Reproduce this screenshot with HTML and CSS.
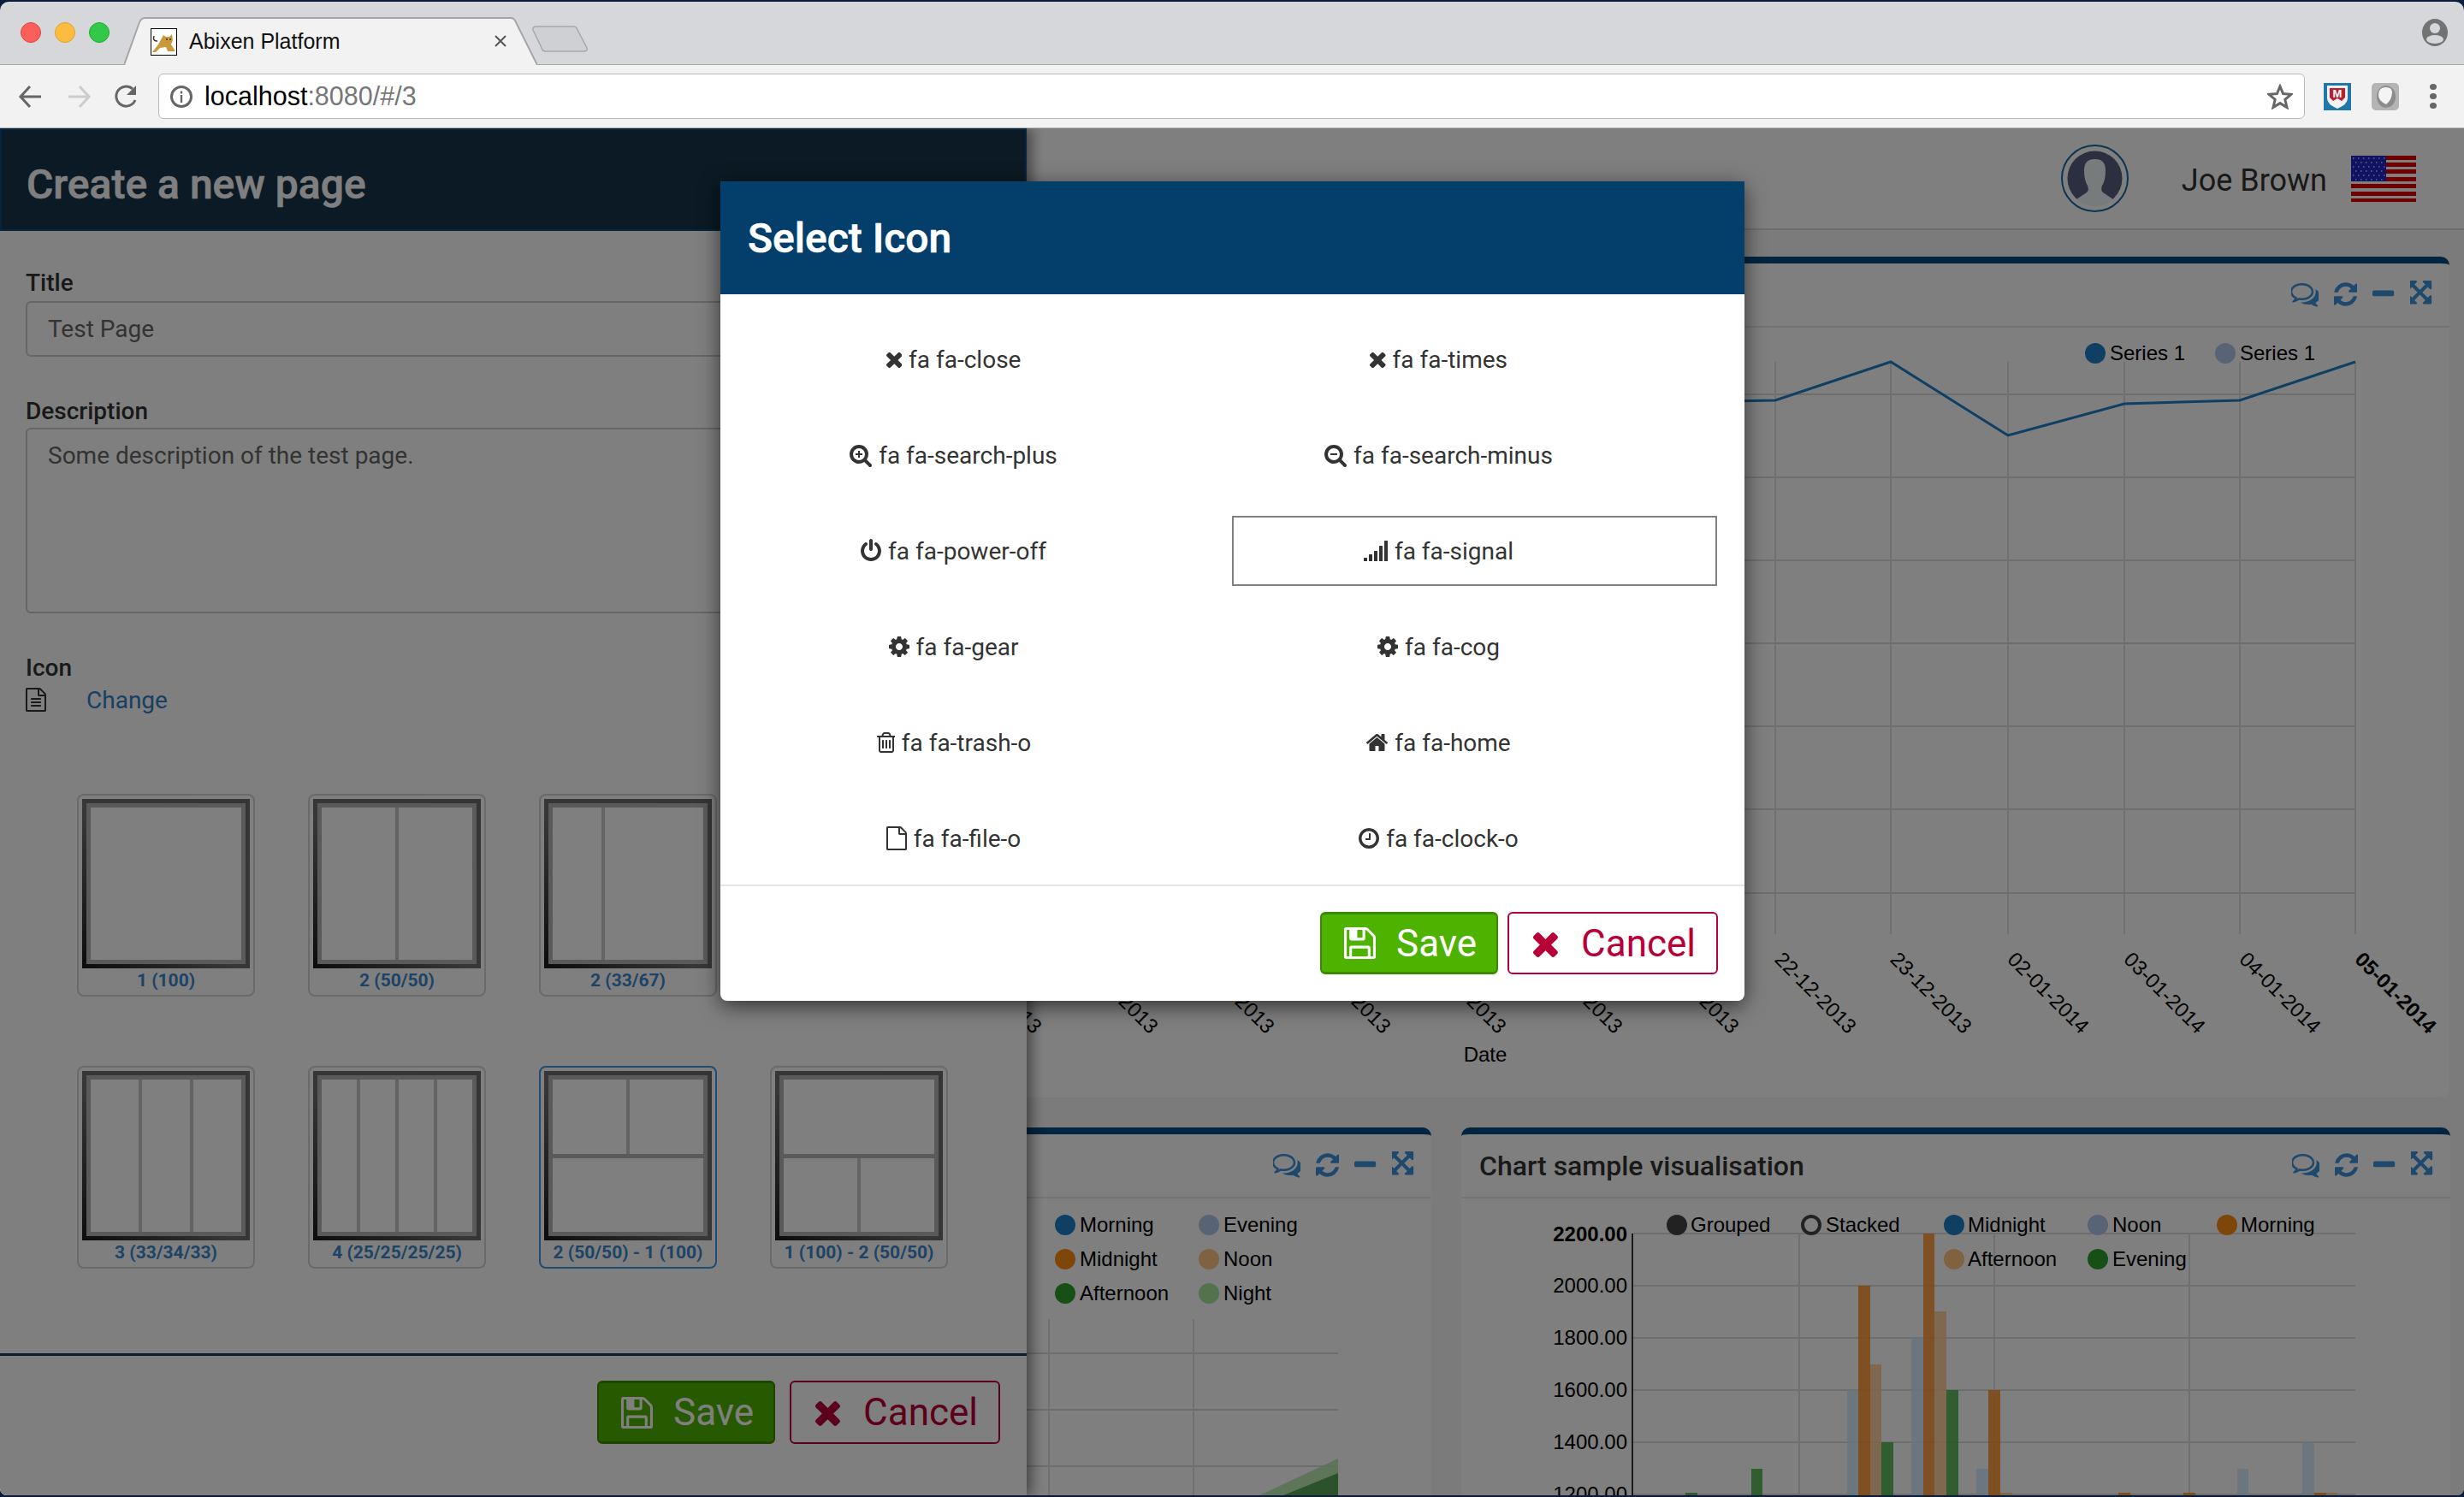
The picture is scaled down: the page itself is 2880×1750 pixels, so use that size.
FILE: index.html
```html
<!DOCTYPE html>
<html lang="en">
<head>
  <meta charset="UTF-8" />
  <title>Abixen Platform</title>
  <link rel="stylesheet" href="styles.css">
</head>
<body>

<!-- ICON PATHS -->
<svg class="sprite">
  <defs>
    <path id="i-times" d="M1490 1322q0 40-28 68l-136 136q-28 28-68 28t-68-28l-294-294-294 294q-28 28-68 28t-68-28l-136-136q-28-28-28-68t28-68l294-294-294-294q-28-28-28-68t28-68l136-136q28-28 68-28t68 28l294 294 294-294q28-28 68-28t68 28l136 136q28 28 28 68t-28 68l-294 294 294 294q28 28 28 68z"/>
    <path id="i-search" d="M1216 832q0-185-131.500-316.500t-316.500-131.500-316.500 131.500-131.500 316.500 131.500 316.500 316.500 131.500 316.500-131.500 131.500-316.500zm512 832q0 52-38 90t-90 38q-54 0-90-38l-343-342q-179 124-399 124-143 0-273.500-55.500t-225-150-150-225-55.500-273.500 55.500-273.500 150-225 225-150 273.500-55.500 273.500 55.500 225 150 150 225 55.500 273.500q0 220-124 399l343 343q37 37 37 90z"/>
    <path id="i-power" d="M1664 896q0 156-61 298t-164 245-245 164-298 61-298-61-245-164-164-245-61-298q0-182 80.500-343t226.500-270q43-32 95.500-25t83.500 50q32 42 24.500 94.500t-49.500 84.500q-98 74-151.500 181t-53.500 228q0 104 40.500 198.500t109.500 163.500 163.500 109.500 198.500 40.500 198.500-40.500 163.500-109.500 109.500-163.500 40.500-198.500q0-121-53.500-228t-151.500-181q-42-32-49.500-84.500t24.500-94.500q31-43 84-50t95 25q146 109 226.500 270t80.500 343zm-640-768v640q0 52-38 90t-90 38-90-38-38-90v-640q0-52 38-90t90-38 90 38 38 90z"/>
    <path id="i-cog" d="M1152 896q0-106-75-181t-181-75-181 75-75 181 75 181 181 75 181-75 75-181zm512-109v222q0 12-8 23t-20 13l-185 28q-19 54-39 91 35 50 107 138 10 12 10 25t-9 23q-27 37-99 108t-94 71q-12 0-26-9l-138-108q-44 23-91 38-16 136-29 186-7 28-36 28h-222q-14 0-24.500-8.500t-11.500-21.500l-28-184q-49-16-90-37l-141 107q-10 9-25 9-14 0-25-11-126-114-165-168-7-10-7-23 0-12 8-23 15-21 51-66.500t54-70.500q-27-50-41-99l-183-27q-13-2-21-12.500t-8-23.500v-222q0-12 8-23t19-13l186-28q14-46 39-92-40-57-107-138-10-12-10-24 0-10 9-23 26-36 98.500-107.500t94.500-71.500q13 0 26 10l138 107q44-23 91-38 16-136 29-186 7-28 36-28h222q14 0 24.500 8.500t11.500 21.500l28 184q49 16 90 37l142-107q9-9 24-9 13 0 25 10 129 119 165 170 7 8 7 22 0 12-8 23-15 21-51 66.500t-54 70.500q26 50 41 98l183 28q13 2 21 12.500t8 23.500z"/>
    <path id="i-trash" d="M704 736v576q0 14-9 23t-23 9h-64q-14 0-23-9t-9-23v-576q0-14 9-23t23-9h64q14 0 23 9t9 23zm256 0v576q0 14-9 23t-23 9h-64q-14 0-23-9t-9-23v-576q0-14 9-23t23-9h64q14 0 23 9t9 23zm256 0v576q0 14-9 23t-23 9h-64q-14 0-23-9t-9-23v-576q0-14 9-23t23-9h64q14 0 23 9t9 23zm128 724v-948h-896v948q0 22 7 40.500t14.500 27 10.500 8.500h832q3 0 10.500-8.500t14.500-27 7-40.500zm-672-1076h448l-48-117q-7-9-17-11h-317q-10 2-17 11zm928 32v64q0 14-9 23t-23 9h-96v948q0 83-47 143.500t-113 60.500h-832q-66 0-113-58.500t-47-141.500v-952h-96q-14 0-23-9t-9-23v-64q0-14 9-23t23-9h309l70-167q15-37 54-63t79-26h320q40 0 79 26t54 63l70 167h309q14 0 23 9t9 23z"/>
    <path id="i-home" d="M1472 992v480q0 26-19 45t-45 19h-384v-384h-256v384h-384q-26 0-45-19t-19-45v-480q0-1 .5-3t.5-3l575-474 575 474q1 2 1 6zm223-69l-62 74q-8 9-21 11h-3q-13 0-21-7l-692-577-692 577q-12 8-24 7-13-2-21-11l-62-74q-8-10-7-23.500t11-21.500l719-599q32-26 76-26t76 26l244 204v-195q0-14 9-23t23-9h192q14 0 23 9t9 23v408l219 182q10 8 11 21.500t-7 23.500z"/>
    <path id="i-file" d="M1596 380q28 28 48 76t20 88v1152q0 40-28 68t-68 28h-1344q-40 0-68-28t-28-68v-1600q0-40 28-68t68-28h896q40 0 88 20t76 48zm-444-244v376h376q-10-29-22-41l-313-313q-12-12-41-22zm384 1528v-1024h-416q-40 0-68-28t-28-68v-416h-768v1536h1280z"/>
    <path id="i-clock" d="M1024 544v448q0 14-9 23t-23 9h-320q-14 0-23-9t-9-23v-64q0-14 9-23t23-9h224v-352q0-14 9-23t23-9h64q14 0 23 9t9 23zm416 352q0-148-73-273t-198-198-273-73-273 73-198 198-73 273 73 273 198 198 273 73 273-73 198-198 73-273zm224 0q0 209-103 385.500t-279.500 279.500-385.500 103-385.500-103-279.500-279.500-103-385.500 103-385.500 279.500-279.500 385.500-103 385.500 103 279.500 279.500 103 385.500z"/>
    <path id="i-floppy" d="M512 1536h768v-384h-768v384zm896 0h128v-896q0-14-10-38.500t-20-34.500l-281-281q-10-10-34-20t-39-10v416q0 40-28 68t-68 28h-576q-40 0-68-28t-28-68v-416h-128v1280h128v-416q0-40 28-68t68-28h832q40 0 68 28t28 68v416zm-384-928v-320q0-13-9.500-22.500t-22.500-9.500h-192q-13 0-22.500 9.500t-9.500 22.500v320q0 13 9.500 22.500t22.500 9.500h192q13 0 22.500-9.500t9.500-22.500zm640 32v928q0 40-28 68t-68 28h-1344q-40 0-68-28t-28-68v-1344q0-40 28-68t68-28h928q40 0 88 20t76 48l280 280q28 28 48 76t20 88z"/>
    <path id="i-comments" d="M704 384q-153 0-286 52t-211.500 141-78.500 191q0 82 53 158t149 132l97 56-35 84q34-20 62-39l44-31 53 10q78 14 153 14 153 0 286-52t211.500-141 78.500-191-78.500-191-211.500-141-286-52zm0-128q191 0 353.500 68.500t256.500 186.500 94 257-94 257-256.500 186.500-353.500 68.500q-86 0-176-16-124 88-278 128-36 9-86 16h-3q-11 0-20.500-8t-11.500-21q-1-3-1-6.500t.5-6.500 2-6l2.500-5 3.500-5.500 4-5 4.500-5 4-4.500q5-6 23-25t26-29.500 22.500-29 25-38.500 20.500-44q-124-72-195-177t-71-224q0-139 94-257t256.500-186.500 353.500-68.500zm822 1169q10 24 20.500 44t25 38.500 22.500 29 26 29.500 23 25q1 1 4 4.500t4.500 5 4 5 3.500 5.500l2.500 5 2 6 .5 6.500-1 6.500q-3 14-13 22t-22 7q-50-7-86-16-154-40-278-128-90 16-176 16-271 0-472-132 58 4 88 4 161 0 309-45t264-129q125-92 192-212t67-254q0-77-23-152 129 71 204 178t75 230q0 120-71 224.500t-195 176.500z"/>
    <path id="i-refresh" d="M1639 1056q0 5-1 7-64 268-268 434.500t-478 166.500q-146 0-282.500-55t-243.500-157l-129 129q-19 19-45 19t-45-19-19-45v-448q0-26 19-45t45-19h448q26 0 45 19t19 45-19 45l-137 137q71 66 161 102t187 36q134 0 250-65t186-179q11-17 53-117 8-23 30-23h192q13 0 22.500 9.500t9.500 22.500zm25-800v448q0 26-19 45t-45 19h-448q-26 0-45-19t-19-45 19-45l138-138q-148-137-349-137-134 0-250 65t-186 179q-11 17-53 117-8 23-30 23h-199q-13 0-22.500-9.500t-9.500-22.500v-7q65-268 270-434.500t480-166.500q146 0 284 55.500t245 156.500l130-129q19-19 45-19t45 19 19 45z"/>
    <path id="i-minus" d="M1600 736v192q0 40-28 68t-68 28h-1216q-40 0-68-28t-28-68v-192q0-40 28-68t68-28h1216q40 0 68 28t28 68z"/>
    <path id="i-expand" d="M1283 413l-355 355 355 355 144-144q29-31 70-14 39 17 39 59v448q0 26-19 45t-45 19h-448q-42 0-59-40-17-39 14-69l144-144-355-355-355 355 144 144q31 30 14 69-17 40-59 40h-448q-26 0-45-19t-19-45v-448q0-42 40-59 39-17 69 14l144 144 355-355-355-355-144 144q-19 19-45 19-12 0-24-5-40-17-40-59v-448q0-26 19-45t45-19h448q42 0 59 40 17 39-14 69l-144 144 355 355 355-355-144-144q-31-30-14-69 17-40 59-40h448q26 0 45 19t19 45v448q0 42-39 59-13 5-25 5-26 0-45-19z"/>
  </defs>
</svg>

<div class="window">

  <!-- BROWSER CHROME -->
  <div class="tabstrip">
    <span class="light light-red"></span>
    <span class="light light-yellow"></span>
    <span class="light light-green"></span>
    <div class="tab">
      <svg class="tab-shape" viewBox="0 0 483 56"><path d="M0 56 L18 6 Q20 1 25 1 H452 Q456 1 458 6 L483 56" /></svg>
      <svg class="favicon" viewBox="0 0 31 32">
        <rect x="0.5" y="0.5" width="30" height="31" fill="#fff" stroke="#000"/>
        <path d="M15 8 L18 10 H22 L25 7 L26 14 L24 19 L29 27 H20 L18 22 L11 23 L6 28 H2 L9 19 Z" fill="#c99a3c"/>
        <path d="M4 9 Q2 15 8 15 M18 13 h2 M22 13 h2" fill="none" stroke="#333" stroke-width="1.5"/>
      </svg>
      <span class="tab-title">Abixen Platform</span>
      <span class="tab-close">
        <svg viewBox="0 0 14 14"><path d="M1 1 L13 13 M13 1 L1 13"/></svg>
      </span>
    </div>
    <svg class="newtab" viewBox="0 0 65 31"><path d="M1 5 Q0 1 5 1 H48 Q52 1 53 5 L64 26 Q65 30 60 30 H16 Q12 30 11 26 Z"/></svg>
    <svg class="profile" viewBox="0 0 30 32">
      <ellipse cx="15" cy="16" rx="15" ry="16" fill="#737373"/>
      <ellipse cx="15" cy="11" rx="6" ry="6" fill="#d6d7db"/>
      <ellipse cx="15" cy="24" rx="10" ry="5" fill="#d6d7db"/>
    </svg>
  </div>

  <div class="toolbar">
    <svg class="nav-icon" viewBox="0 0 30 30"><path d="M27 15 H4 M14 3 L3 15 L14 27" stroke="#666"/></svg>
    <svg class="nav-icon" viewBox="0 0 30 30"><path d="M3 15 H26 M16 3 L27 15 L16 27" stroke="#ccc"/></svg>
    <svg class="nav-icon" viewBox="0 0 30 30"><path d="M25 19 A11.500 11.500 0 1 1 22 6" stroke="#666"/><path d="M26 2 V13 H15 Z" fill="#666"/></svg>
    <div class="omnibox">
      <svg class="info" viewBox="0 0 26 26">
        <circle cx="13" cy="13" r="11.500" fill="none" stroke="#666" stroke-width="3"/>
        <rect x="11.800" y="6.500" width="2.400" height="3" fill="#666"/>
        <rect x="11.800" y="11" width="2.400" height="9" fill="#666"/>
      </svg>
      <span class="url">localhost<span class="url-rest">:8080/#/3</span></span>
      <svg class="star" viewBox="0 0 30 30"><path d="M15 3 L18.600 11.500 L28 12.300 L20.800 18.300 L23 27.500 L15 22.600 L7 27.500 L9.200 18.300 L2 12.300 L11.400 11.500 Z"/></svg>
    </div>
    <svg class="ext ext-first" viewBox="0 0 32 32">
      <rect width="32" height="32" fill="#1f78a8"/>
      <path d="M4 3 H28 V18 Q28 25 16 30 Q4 25 4 18 Z" fill="#f2f2f2"/>
      <path d="M7 6 H25 V17 L21 21 L16 18 L11 21 L7 17 Z" fill="#b9202f"/>
      <text x="16" y="17" class="ext-m">M</text>
    </svg>
    <svg class="ext" viewBox="0 0 32 32">
      <rect width="32" height="32" rx="5" fill="#b4b4b4"/>
      <ellipse cx="17" cy="16" rx="11" ry="13" fill="#8c8c8c"/>
      <path d="M8 14 Q8 5 17 5 Q24 5 24 11 Q24 19 17 25 Q8 21 8 14 Z" fill="#f4f4f4"/>
    </svg>
    <div class="kebab"><span></span><span></span><span></span></div>
  </div>

  <!-- DASHBOARD UNDER THE OVERLAY -->
  <div class="page">
    <div class="dash-header">
      <svg class="user-pic" viewBox="0 0 79 79">
        <circle cx="39.500" cy="39.500" r="38.500" fill="#fff" stroke="#1a6a9c" stroke-width="2"/>
        <circle cx="39.500" cy="39.500" r="32" fill="#565e80" />
        <path d="M18 64 L30 56 Q33 53 31 48 Q27 42 27 30 Q27 17 39.500 17 Q52 17 52 30 Q52 42 48 48 Q46 53 49 56 L61 64 Q52 72 39.500 72 Q27 72 18 64 Z" fill="#f0f6f8"/>
      </svg>
      <span class="user-name">Joe Brown</span>
      <svg class="flag" viewBox="0 0 76 54">
        <rect width="76" height="54" fill="#ffffff"/>
        <g fill="#e00000">
          <rect y="0" width="76" height="5"/><rect y="8" width="76" height="5"/><rect y="16" width="76" height="5"/><rect y="25" width="76" height="5"/><rect y="33" width="76" height="5"/><rect y="42" width="76" height="5"/><rect y="50" width="76" height="4"/>
        </g>
        <rect width="41" height="30" fill="#2424c8"/>
        <g fill="none" stroke="#c8c8ff" stroke-width="1.500" stroke-dasharray="1.500 4.500">
          <path d="M2 3 H40 M5 8 H40 M2 13 H40 M5 18 H40 M2 23 H40 M5 28 H40"/>
        </g>
      </svg>
    </div>

    <div class="dash-main">
      <div class="widget widget-wide">
        <div class="widget-head">
          <div class="widget-tools">
            <svg class="tool tool-c" viewBox="64 0 1664 1792"><use href="#i-comments"/></svg>
            <svg class="tool" viewBox="128 0 1536 1792"><use href="#i-refresh"/></svg>
            <svg class="tool" viewBox="192 0 1408 1792"><use href="#i-minus"/></svg>
            <svg class="tool" viewBox="128 0 1536 1792"><use href="#i-expand"/></svg>
          </div>
        </div>
        <svg class="chart chart-wide" viewBox="517 384 2346 899">
          <g class="grid">
            <path d="M1200 462H2753M1200 559H2753M1200 656H2753M1200 753H2753M1200 850H2753M1200 947H2753M1200 1045H2753"/>
            <path class="grid-v" d="M2075 424V1093M2210 424V1093M2347 424V1093M2483 424V1093M2618 424V1093M2753 424V1093"/>
          </g>
          <polyline class="series" points="1939,471 2075,469 2210,424 2347,510 2483,473 2618,469 2753,424"/>
          <circle cx="2449" cy="414" r="12" class="c-midnight"/><text x="2466" y="422">Series 1</text>
          <circle cx="2601" cy="414" r="12" class="c-noon"/><text x="2618" y="422">Series 1</text>
          <g class="ticks">
            <text transform="translate(1121 1124) rotate(45)">14-12-2013</text>
            <text transform="translate(1257 1124) rotate(45)">15-12-2013</text>
            <text transform="translate(1393 1124) rotate(45)">16-12-2013</text>
            <text transform="translate(1529 1124) rotate(45)">17-12-2013</text>
            <text transform="translate(1664 1124) rotate(45)">18-12-2013</text>
            <text transform="translate(1800 1124) rotate(45)">19-12-2013</text>
            <text transform="translate(1936 1124) rotate(45)">20-12-2013</text>
            <text transform="translate(2073 1124) rotate(45)">22-12-2013</text>
            <text transform="translate(2208 1124) rotate(45)">23-12-2013</text>
            <text transform="translate(2345 1124) rotate(45)">02-01-2014</text>
            <text transform="translate(2481 1124) rotate(45)">03-01-2014</text>
            <text transform="translate(2616 1124) rotate(45)">04-01-2014</text>
            <text class="tick-last" transform="translate(2751 1124) rotate(45)">05-01-2014</text>
          </g>
          <text x="1736" y="1242" text-anchor="middle">Date</text>
        </svg>
      </div>

      <div class="widget">
        <div class="widget-head">
          <div class="widget-tools">
            <svg class="tool tool-c" viewBox="64 0 1664 1792"><use href="#i-comments"/></svg>
            <svg class="tool" viewBox="128 0 1536 1792"><use href="#i-refresh"/></svg>
            <svg class="tool" viewBox="192 0 1408 1792"><use href="#i-minus"/></svg>
            <svg class="tool" viewBox="128 0 1536 1792"><use href="#i-expand"/></svg>
          </div>
        </div>
        <svg class="chart chart-low" viewBox="517 1401 1156 400">
          <g class="grid">
            <path d="M1200 1582H1564M1200 1648H1564M1200 1714H1564"/>
            <path class="grid-v" d="M1226 1542V1760M1395 1542V1760"/>
          </g>
          <polygon points="1468,1750 1564,1705 1564,1750" class="area-light"/>
          <polygon points="1495,1750 1564,1722 1564,1750" class="area-dark"/>
          <circle cx="1245" cy="1432" r="12" class="c-midnight"/><text x="1262" y="1440">Morning</text>
          <circle cx="1413" cy="1432" r="12" class="c-noon"/><text x="1430" y="1440">Evening</text>
          <circle cx="1245" cy="1472" r="12" class="c-morning"/><text x="1262" y="1480">Midnight</text>
          <circle cx="1413" cy="1472" r="12" class="c-after"/><text x="1430" y="1480">Noon</text>
          <circle cx="1245" cy="1512" r="12" class="c-evening"/><text x="1262" y="1520">Afternoon</text>
          <circle cx="1413" cy="1512" r="12" class="c-night"/><text x="1430" y="1520">Night</text>
        </svg>
      </div>

      <div class="widget">
        <div class="widget-head">
          <span class="widget-title">Chart sample visualisation</span>
          <div class="widget-tools">
            <svg class="tool tool-c" viewBox="64 0 1664 1792"><use href="#i-comments"/></svg>
            <svg class="tool" viewBox="128 0 1536 1792"><use href="#i-refresh"/></svg>
            <svg class="tool" viewBox="192 0 1408 1792"><use href="#i-minus"/></svg>
            <svg class="tool" viewBox="128 0 1536 1792"><use href="#i-expand"/></svg>
          </div>
        </div>
        <svg class="chart chart-low" viewBox="1708 1401 1156 400">
          <g class="grid">
            <path d="M1908 1442H2753M1908 1503H2753M1908 1564H2753M1908 1625H2753M1908 1686H2753M1908 1747H2753"/>
            <path class="grid-v" d="M2103 1442V1760M2331 1442V1760M2559 1442V1760"/>
          </g>
          <path class="axis" d="M1908 1442V1760"/>
          <g class="bars">
            <rect class="b-evening" x="1970" y="1745" width="14" height="15"/>
            <rect class="b-evening" x="2047" y="1717" width="13" height="43"/>
            <rect class="b-noon" x="2159" y="1625" width="13" height="135"/>
            <rect class="b-morning" x="2172" y="1503" width="14" height="257"/>
            <rect class="b-after" x="2186" y="1595" width="13" height="165"/>
            <rect class="b-evening" x="2199" y="1686" width="14" height="74"/>
            <rect class="b-noon" x="2234" y="1564" width="14" height="196"/>
            <rect class="b-morning" x="2248" y="1442" width="13" height="318"/>
            <rect class="b-after" x="2261" y="1533" width="14" height="227"/>
            <rect class="b-evening" x="2275" y="1625" width="14" height="135"/>
            <rect class="b-noon" x="2310" y="1717" width="14" height="43"/>
            <rect class="b-morning" x="2324" y="1625" width="14" height="135"/>
            <rect class="b-after" x="2338" y="1745" width="14" height="15"/>
            <rect class="b-morning" x="2476" y="1745" width="14" height="15"/>
            <rect class="b-morning" x="2552" y="1745" width="14" height="15"/>
            <rect class="b-noon" x="2615" y="1717" width="13" height="43"/>
            <rect class="b-noon" x="2691" y="1686" width="14" height="74"/>
            <rect class="b-morning" x="2705" y="1745" width="14" height="15"/>
            <rect class="b-after" x="2719" y="1745" width="13" height="15"/>
          </g>
          <g class="y-labels">
            <text class="tick-last" x="1902" y="1451">2200.00</text>
            <text x="1902" y="1511">2000.00</text>
            <text x="1902" y="1572">1800.00</text>
            <text x="1902" y="1633">1600.00</text>
            <text x="1902" y="1694">1400.00</text>
            <text x="1902" y="1755">1200.00</text>
          </g>
          <circle cx="1960" cy="1432" r="12" class="c-black"/><text x="1976" y="1440">Grouped</text>
          <circle cx="2117" cy="1432" r="10" class="c-hollow"/><text x="2134" y="1440">Stacked</text>
          <circle cx="2284" cy="1432" r="12" class="c-midnight"/><text x="2300" y="1440">Midnight</text>
          <circle cx="2452" cy="1432" r="12" class="c-noon"/><text x="2469" y="1440">Noon</text>
          <circle cx="2603" cy="1432" r="12" class="c-morning"/><text x="2619" y="1440">Morning</text>
          <circle cx="2284" cy="1472" r="12" class="c-after"/><text x="2300" y="1480">Afternoon</text>
          <circle cx="2452" cy="1472" r="12" class="c-evening"/><text x="2469" y="1480">Evening</text>
        </svg>
      </div>
    </div>

    <!-- CREATE PAGE DRAWER -->
    <div class="drawer">
      <div class="drawer-head">Create a new page</div>
      <div class="drawer-form">
        <label class="field-label">Title</label>
        <div class="input">Test Page</div>
        <label class="field-label label-desc">Description</label>
        <div class="input textarea">Some description of the test page.</div>
        <label class="field-label label-icon">Icon</label>
        <div class="icon-row">
          <svg class="file-icon" viewBox="128 0 1536 1792">
            <use href="#i-file"/>
            <rect x="512" y="768" width="768" height="128" rx="30"/>
            <rect x="512" y="1024" width="768" height="128" rx="30"/>
            <rect x="512" y="1280" width="768" height="128" rx="30"/>
          </svg>
          <a class="link">Change</a>
        </div>

        <div class="layouts">
          <div class="layout-card">
            <div class="thumb"><div class="thumb-in"><div class="pane-row"><i></i></div></div></div>
            <span class="layout-name">1 (100)</span>
          </div>
          <div class="layout-card">
            <div class="thumb"><div class="thumb-in"><div class="pane-row"><i></i><i></i></div></div></div>
            <span class="layout-name">2 (50/50)</span>
          </div>
          <div class="layout-card">
            <div class="thumb"><div class="thumb-in"><div class="pane-row"><i class="w1"></i><i class="w2"></i></div></div></div>
            <span class="layout-name">2 (33/67)</span>
          </div>
          <div class="layout-card"></div>
          <div class="layout-card">
            <div class="thumb"><div class="thumb-in"><div class="pane-row"><i></i><i></i><i></i></div></div></div>
            <span class="layout-name">3 (33/34/33)</span>
          </div>
          <div class="layout-card">
            <div class="thumb"><div class="thumb-in"><div class="pane-row"><i></i><i></i><i></i><i></i></div></div></div>
            <span class="layout-name">4 (25/25/25/25)</span>
          </div>
          <div class="layout-card layout-active">
            <div class="thumb"><div class="thumb-in"><div class="pane-row"><i></i><i></i></div><div class="pane-row"><i></i></div></div></div>
            <span class="layout-name">2 (50/50) - 1 (100)</span>
          </div>
          <div class="layout-card">
            <div class="thumb"><div class="thumb-in"><div class="pane-row"><i></i></div><div class="pane-row"><i></i><i></i></div></div></div>
            <span class="layout-name">1 (100) - 2 (50/50)</span>
          </div>
        </div>
      </div>
      <div class="drawer-foot">
        <button class="btn btn-save">
          <svg class="btn-icon" viewBox="128 128 1536 1536"><use href="#i-floppy"/></svg>Save
        </button>
        <button class="btn btn-cancel">
          <svg class="btn-icon icon-x" viewBox="302 238 1188 1316"><use href="#i-times"/></svg>Cancel
        </button>
      </div>
    </div>

    <div class="overlay"></div>

    <!-- SELECT ICON MODAL -->
    <div class="modal">
      <div class="modal-head">Select Icon</div>
      <div class="icon-grid">
        <div class="icon-cell"><svg class="fa" viewBox="302 0 1188 1792"><use href="#i-times"/></svg>fa fa-close</div>
        <div class="icon-cell"><svg class="fa" viewBox="302 0 1188 1792"><use href="#i-times"/></svg>fa fa-times</div>
        <div class="icon-cell">
          <svg class="fa" viewBox="64 0 1664 1792"><use href="#i-search"/><path d="M704 576h128v192h192v128h-192v192h-128v-192h-192v-128h192z"/></svg>fa fa-search-plus
        </div>
        <div class="icon-cell">
          <svg class="fa" viewBox="64 0 1664 1792"><use href="#i-search"/><rect x="512" y="768" width="512" height="128"/></svg>fa fa-search-minus
        </div>
        <div class="icon-cell"><svg class="fa" viewBox="128 0 1536 1792"><use href="#i-power"/></svg>fa fa-power-off</div>
        <div class="icon-cell icon-cell-active">
          <svg class="fa" viewBox="0 0 1792 1792">
            <rect x="0" y="1408" width="256" height="256" rx="32"/><rect x="384" y="1152" width="256" height="512" rx="32"/><rect x="768" y="896" width="256" height="768" rx="32"/><rect x="1152" y="512" width="256" height="1152" rx="32"/><rect x="1536" y="128" width="256" height="1536" rx="32"/>
          </svg>fa fa-signal
        </div>
        <div class="icon-cell"><svg class="fa" viewBox="128 0 1536 1792"><use href="#i-cog"/></svg>fa fa-gear</div>
        <div class="icon-cell"><svg class="fa" viewBox="128 0 1536 1792"><use href="#i-cog"/></svg>fa fa-cog</div>
        <div class="icon-cell"><svg class="fa" viewBox="128 0 1408 1792"><use href="#i-trash"/></svg>fa fa-trash-o</div>
        <div class="icon-cell"><svg class="fa" viewBox="97 0 1598 1792"><use href="#i-home"/></svg>fa fa-home</div>
        <div class="icon-cell"><svg class="fa" viewBox="128 0 1536 1792"><use href="#i-file"/></svg>fa fa-file-o</div>
        <div class="icon-cell"><svg class="fa" viewBox="128 0 1536 1792"><use href="#i-clock"/></svg>fa fa-clock-o</div>
      </div>
      <div class="modal-foot">
        <button class="btn btn-save">
          <svg class="btn-icon" viewBox="128 128 1536 1536"><use href="#i-floppy"/></svg>Save
        </button>
        <button class="btn btn-cancel">
          <svg class="btn-icon icon-x" viewBox="302 238 1188 1316"><use href="#i-times"/></svg>Cancel
        </button>
      </div>
    </div>
  </div>
</div>
</body>
</html>
```

FILE: styles.css
```css
* { box-sizing: border-box; }
html, body { height: 100%; }
body {
  margin: 0;
  background: #0b1c36;
  font-family: Roboto, "Liberation Sans", sans-serif;
  overflow: hidden;
}
.sprite { display: none; }

.window {
  margin-top: 2px;
  height: 1746px;
  display: flex;
  flex-direction: column;
  border-radius: 10px 10px 8px 8px;
  overflow: hidden;
}

/* browser chrome */
.tabstrip {
  height: 74px;
  flex: none;
  display: flex;
  align-items: center;
  padding-left: 24px;
  background: #d6d7db;
  border-bottom: 1px solid #a6a6a6;
}
.light {
  width: 24px;
  height: 24px;
  border-radius: 50%;
  margin-right: 16px;
  margin-top: -2px;
  margin-bottom: 0;
}
.light-red { background: #fc5f5b; border: 1px solid #e0443e; }
.light-yellow { background: #fdbc40; border: 1px solid #dea123; }
.light-green { background: #34c84a; border: 1px solid #1dad2b; }
.tab {
  position: relative;
  width: 483px;
  height: 56px;
  margin-left: 1px;
  margin-bottom: -1px;
  align-self: flex-end;
  display: flex;
  align-items: center;
  padding-left: 31px;
  font-family: "Liberation Sans", sans-serif;
}
.tab-shape {
  position: absolute;
  left: 0;
  top: 0;
  width: 483px;
  height: 56px;
}
.tab-shape path { fill: #f2f2f2; stroke: #a6a6a6; stroke-width: 2; }
.favicon { position: relative; width: 31px; height: 32px; margin-top: 2px; }
.tab-title { position: relative; margin-left: 14px; font-size: 25px; color: #111; margin-top: 1px; }
.tab-close {
  position: relative;
  margin-left: auto;
  margin-right: 36px;
  width: 14px;
  height: 14px;
  display: flex;
}
.tab-close svg { width: 14px; height: 14px; }
.tab-close path { stroke: #555; stroke-width: 2; fill: none; }
.newtab {
  width: 65px;
  height: 31px;
  margin-left: -6px;
  margin-top: 13px;
}
.newtab path { fill: #cfd0d3; stroke: #a8a8a8; stroke-width: 1.500; }
.profile { width: 30px; height: 32px; margin-left: auto; margin-right: 19px; margin-top: -2px; }

.toolbar {
  height: 74px;
  flex: none;
  display: flex;
  align-items: center;
  padding-left: 21px;
  background: #f2f2f2;
  border-bottom: 1px solid #b8b8b8;
}
.nav-icon { width: 30px; height: 30px; margin-right: 26px; }
.nav-icon path { fill: none; stroke-width: 3; }
.nav-icon path[fill] { fill: #666; stroke: none; }
.omnibox {
  width: 2509px;
  height: 53px;
  margin-left: -4px;
  display: flex;
  align-items: center;
  padding: 0 13px;
  background: #fff;
  border: 1px solid #b8b8b8;
  border-radius: 6px;
  font-family: "Liberation Sans", sans-serif;
}
.info { width: 26px; height: 26px; }
.url { margin-left: 14px; font-size: 30.500px; color: #000; }
.url-rest { color: #777; }
.star { width: 30px; height: 30px; margin-left: auto; }
.star path { fill: none; stroke: #666; stroke-width: 3; }
.ext { width: 32px; height: 32px; margin-left: 24px; }
.ext-first { margin-left: 22px; }
.ext-m { font-family: "Liberation Sans", sans-serif; font-size: 13px; font-weight: bold; fill: #fff; text-anchor: middle; }
.kebab {
  margin-left: 36px;
  display: flex;
  flex-direction: column;
  gap: 4px;
}
.kebab span { width: 8px; height: 7px; border-radius: 50%; background: #666; }

/* page behind the overlay */
.page {
  position: relative;
  flex: 1;
  min-height: 0;
  overflow: hidden;
  background: #f7f7f7;
}
.dash-header {
  height: 119px;
  display: flex;
  align-items: center;
  padding-right: 56px;
  justify-content: flex-end;
  background: #fff;
  border-bottom: 2px solid #dcdcdc;
}
.user-pic { width: 79px; height: 79px; margin-right: 62px; }
.user-name { font-size: 36px; color: #333; margin-right: 28px; margin-top: 5px; }
.flag { width: 76px; height: 54px; }

.dash-main {
  padding: 31px 16px 0 517px;
  display: grid;
  grid-template-columns: 1156px 1156px;
  column-gap: 35px;
  row-gap: 35px;
}
.widget {
  background: #fff;
  border-top: 8px solid #064a7e;
  border-radius: 10px 10px 0 0;
}
.widget-wide {
  grid-column: 1 / 3;
  height: 983px;
  border-radius: 10px;
  width: 2346px;
}
.widget-head {
  height: 75px;
  display: flex;
  align-items: center;
  padding: 0 19px 0 21px;
  border-bottom: 2px solid #e8e8e8;
}
.widget-title { font-size: 32px; font-weight: 500; color: #333; }
.widget-tools { margin-left: auto; display: flex; align-items: center; gap: 18px; margin-top: -2px; }
.tool { height: 32px; fill: #3c90d8; }
.tool-c { height: 35px; margin-top: -1px; }

.chart { display: block; width: 100%; }
.chart-wide { height: 899px; }
.chart-low { height: 400px; }
.chart text { font-family: "Liberation Sans", sans-serif; font-size: 24px; fill: #000; }
.grid path { fill: none; stroke: #dcdcdc; stroke-width: 2; }
.grid .grid-v { stroke: #e0e0e0; }
.series { fill: none; stroke: #1f80c8; stroke-width: 3; }
.ticks text { font-size: 24px; }
.chart .tick-last { font-weight: bold; }
.y-labels text { text-anchor: end; }
.axis { stroke: #333; stroke-width: 2; fill: none; }
.c-black { fill: #444; }
.c-hollow { fill: none; stroke: #444; stroke-width: 4; }
.c-midnight { fill: #1f80c8; }
.c-noon { fill: #b0c8ea; }
.c-morning { fill: #ff8c12; }
.c-after { fill: #ffc47e; }
.c-evening { fill: #2ca02c; }
.c-night { fill: #a4e696; }
.b-noon { fill: #cfe8ff; opacity: .8; }
.b-morning { fill: #ff8f28; opacity: .85; }
.b-after { fill: #ffc890; opacity: .85; }
.b-evening { fill: #44b044; opacity: .85; }
.area-light { fill: #b4e6a8; opacity: .85; }
.area-dark { fill: #58a458; }

/* drawer */
.drawer {
  position: absolute;
  left: 0;
  top: 0;
  bottom: 0;
  width: 1200px;
  display: flex;
  flex-direction: column;
  background: #fff;
  box-shadow: 6px 0 14px rgba(0, 0, 0, .45);
}
.drawer-head {
  height: 120px;
  flex: none;
  display: flex;
  align-items: center;
  padding: 10px 0 0 29px;
  font-size: 48px;
  font-weight: 500;
  -webkit-text-stroke: .6px #fff;
  color: #fff;
  background: #163448;
  border: 2px solid #0c4a78;
}
.drawer-form { padding: 47px 30px 0; }
.field-label {
  display: block;
  font-size: 28px;
  line-height: 28px;
  font-weight: 500;
  color: #333;
}
.input {
  height: 65px;
  margin-top: 7px;
  padding: 0 24px;
  display: flex;
  align-items: center;
  font-size: 28px;
  color: #666;
  border: 2px solid #ccc;
  border-radius: 6px;
}
.textarea {
  height: 217px;
  margin-top: 5px;
  align-items: flex-start;
  padding-top: 14px;
}
.label-desc { margin-top: 50px; }
.label-icon { margin-top: 50px; }
.icon-row { margin-top: 9px; display: flex; align-items: center; height: 28px; }
.file-icon { height: 28px; margin-right: 47px; fill: #333; }
.link { font-size: 28px; color: #2f80c4; }

.layouts {
  margin-top: 96px;
  padding-left: 60px;
  display: grid;
  grid-template-columns: repeat(4, 208px);
  column-gap: 62px;
  row-gap: 81px;
}
.layout-card {
  height: 237px;
  padding: 4px;
  text-align: center;
  border: 2px solid #d4d4d4;
  border-radius: 8px;
}
.layout-active { border-color: #3e98e0; }
.thumb {
  height: 198px;
  padding: 5px;
  background: linear-gradient(to top right, #181818, #6e6e6e 45%, #6a6a6a);
}
.thumb-in {
  height: 100%;
  padding: 5px;
  display: flex;
  flex-direction: column;
  gap: 5px;
  background: #b4b4b4;
}
.pane-row { flex: 1; display: flex; gap: 4px; background: #c8c8c8; }
.pane-row i { flex: 1; background: #fff; }
.pane-row .w1 { flex: 33; }
.pane-row .w2 { flex: 67; }
.layout-name {
  display: block;
  margin-top: 3px;
  font-size: 21px;
  line-height: 22px;
  font-weight: 700;
  color: #3a88cc;
}
.drawer-foot {
  margin-top: auto;
  height: 166px;
  flex: none;
  display: flex;
  justify-content: flex-end;
  gap: 17px;
  padding: 29px 31px 0 0;
  border-top: 3px solid #183850;
}

/* buttons */
.btn {
  height: 74px;
  display: flex;
  align-items: center;
  gap: 24px;
  padding: 0 23px 0 26px;
  font-family: Roboto, sans-serif;
  font-size: 44px;
  border-radius: 6px;
  cursor: pointer;
}
.btn-icon { height: 37px; fill: currentColor; }
.icon-x { height: 32px; }
.btn-save {
  color: #fff;
  background: #4db200;
  border: 2px solid #3c8a00;
  border-top-width: 3px;
  border-bottom-width: 3px;
}
.btn-cancel {
  color: #b80038;
  background: #fff;
  border: 2px solid #b80038;
  gap: 27px;
  padding: 0 24px 0 28px;
}

/* overlay and modal */
.overlay {
  position: absolute;
  inset: 0;
  background: rgba(0, 0, 0, .5);
}
.modal {
  position: absolute;
  left: 842px;
  top: 62px;
  width: 1197px;
  background: #fff;
  border-radius: 0 0 8px 8px;
  box-shadow: 0 6px 24px rgba(0, 0, 0, .6);
}
.modal-head {
  height: 132px;
  display: flex;
  align-items: center;
  padding-left: 32px;
  font-size: 48px;
  font-weight: 500;
  -webkit-text-stroke: .6px #fff;
  color: #fff;
  background: #043e6b;
}
.icon-grid {
  display: grid;
  grid-template-columns: 567px 567px;
  grid-auto-rows: 82px;
  row-gap: 30px;
  padding: 35px 31px 13px;
}
.icon-cell {
  display: flex;
  align-items: center;
  justify-content: center;
  gap: 8px;
  padding-right: 84px;
  font-size: 28px;
  color: #333;
  border: 2px solid transparent;
}
.icon-cell-active { border-color: #808080; }
.fa { height: 28px; fill: #333; }
.modal-foot {
  display: flex;
  justify-content: flex-end;
  gap: 11px;
  padding: 30px 31px 31px 0;
  border-top: 2px solid #e5e5e5;
}
.modal-foot .btn { height: 73px; }
```
